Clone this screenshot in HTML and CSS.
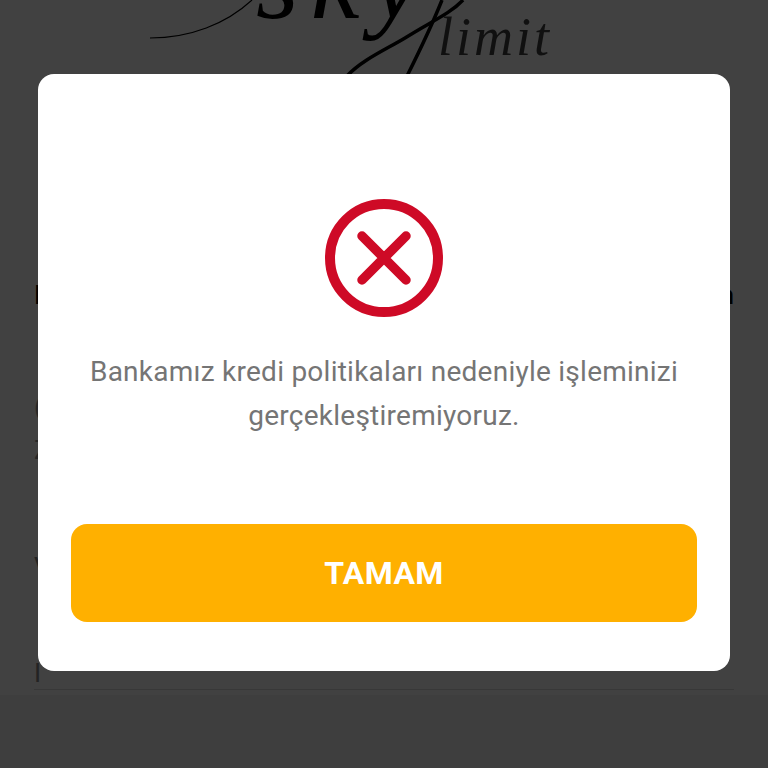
FILE: index.html
```html
<!DOCTYPE html>
<html lang="tr">
<head>
  <meta charset="UTF-8" />
  <meta name="viewport" content="width=device-width, initial-scale=1.0"/>
  <title>Sky Limit</title>
  <link rel="stylesheet" href="styles.css">
</head>
<body>
  <div class="sayfa">
    <header class="logo">
      <svg width="768" height="80" viewBox="0 0 768 80">
        <text class="logo-sky" x="256" y="18">sky</text>
        <text class="logo-limit" x="438" y="55">limit</text>
        <path class="logo-ince" d="M150 38 C190 38 226 24 252 0" />
        <path class="logo-kalin" d="M463 0 C450 14 430 22 405 38 C385 50 362 60 347 76" />
        <path class="logo-kalin" d="M442 0 C434 20 424 42 407 76" />
      </svg>
    </header>
    <main class="icerik">
      <div class="satir satir-baslik"><span>I</span><span>n</span></div>
      <div class="satir satir-bilgi"><span>(</span></div>
      <div class="satir satir-bilgi"><span>Z</span></div>
      <div class="satir satir-kalem"><span>V</span></div>
      <div class="satir satir-son"><span>I</span></div>
    </main>
    <div class="alt-bar"></div>
  </div>

  <div class="perde">
    <div class="uyari">
      <svg class="uyari-ikon" width="120" height="120" viewBox="0 0 120 120">
        <circle cx="60" cy="60" r="54" />
        <path d="M38 38 L82 82 M82 38 L38 82" />
      </svg>
      <p class="uyari-metin">Bankamız kredi politikaları nedeniyle işleminizi gerçekleştiremiyoruz.</p>
      <button class="tamam">TAMAM</button>
    </div>
  </div>
</body>
</html>
```

FILE: styles.css
```css
html, body { margin: 0; padding: 0; height: 100%; overflow: hidden; }
body { font-family: Roboto, "Liberation Sans", sans-serif; background: #fff; color: #000; }

.sayfa { height: 768px; display: flex; flex-direction: column; }
.logo { height: 80px; overflow: hidden; }
.logo svg { display: block; }
.logo-sky { font-family: "Liberation Serif", serif; font-style: italic; font-size: 110px; letter-spacing: 12px; fill: #000; }
.logo-limit { font-family: "Liberation Serif", serif; font-style: italic; font-size: 54px; letter-spacing: 3px; fill: #000; opacity: 0.75; }
.logo-ince { fill: none; stroke: #000; stroke-width: 1.2; }
.logo-kalin { fill: none; stroke: #000; stroke-width: 3.5; }

.icerik { flex: 1; padding: 200px 34px 0; }
.satir { display: flex; justify-content: space-between; font-size: 26px; line-height: 30px; }
.satir-bilgi { margin-top: 13px; color: #999; }
.satir-baslik { font-weight: 500; }
.satir-bilgi:nth-child(2) { margin-top: 82px; }
.satir-kalem { margin-top: 87px; color: #888; padding-bottom: 28px; }
.satir-son { color: #888; margin-top: 48px; padding-bottom: 1px; border-bottom: 1px solid #ddd; }
.alt-bar { height: 73px; margin-top: auto; background: #f3f3f3; }

.perde {
  position: absolute;
  inset: 0;
  background: rgba(0, 0, 0, 0.745);
  display: flex;
  justify-content: center;
  padding-top: 74px;
  box-sizing: border-box;
}
.uyari {
  width: 692px;
  height: 597px;
  box-sizing: border-box;
  padding: 124px 33px 49px;
  background: #fff;
  border-radius: 16px;
  display: flex;
  flex-direction: column;
  align-items: center;
}
.uyari-ikon { fill: none; stroke: #ce0a26; flex: none; }
.uyari-ikon circle { stroke-width: 10; }
.uyari-ikon path { stroke-width: 9.5; stroke-linecap: round; }
.uyari-metin {
  margin: 32px 0 0;
  font-size: 28px;
  letter-spacing: 0.25px;
  line-height: 44px;
  color: #757575;
  text-align: center;
}
.tamam {
  margin-top: auto;
  width: 100%;
  height: 98px;
  flex: none;
  border: none;
  border-radius: 16px;
  background: #ffb000;
  color: #fff;
  font-family: inherit;
  font-size: 32px;
  font-weight: 700;
  letter-spacing: 0.4px;
}
```
